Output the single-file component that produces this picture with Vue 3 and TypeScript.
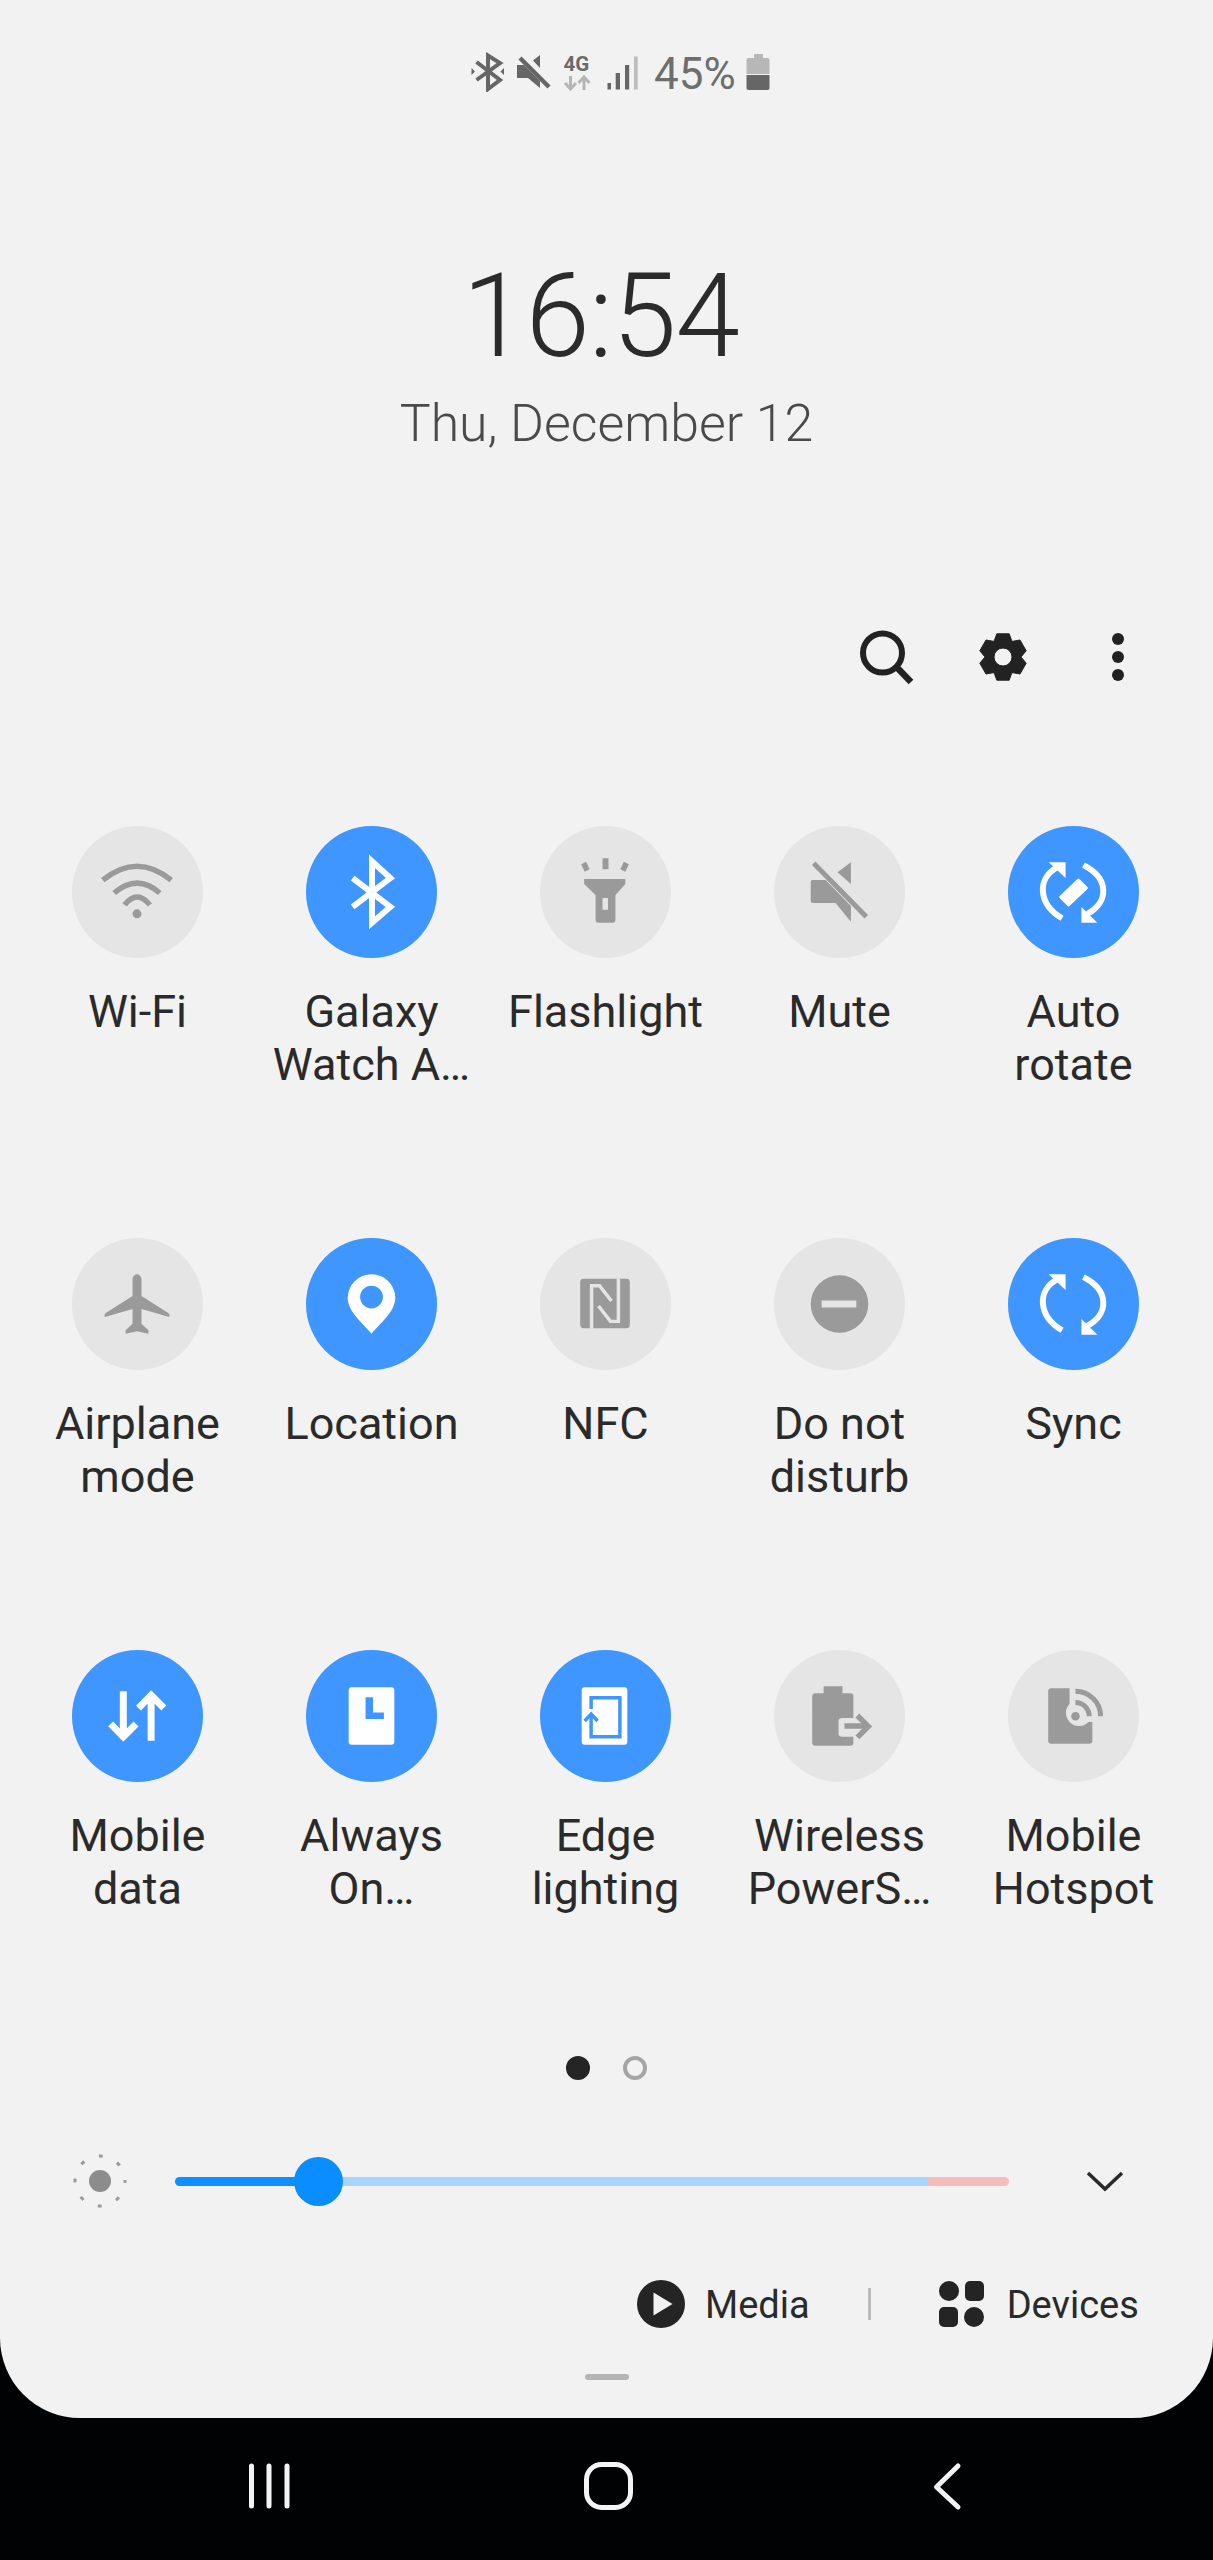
<template>
  <div class="screen">
    <div class="panel">
      <div class="status">
        <svg class="status__icons" width="170" height="40" viewBox="470 52 170 40">
          <!-- bluetooth connected -->
          <path class="st-line" stroke-width="4" d="M476.5 62 L500 80 L488 89 V55.5 L500 63 L476.5 80" />
          <path class="st-fill" d="M471.5 68 L475 71.5 L471.5 75 Z M504 68 L500.5 71.5 L504 75 Z" />
          <!-- mute -->
          <path class="st-fill" d="M533 60.5 L540 55 V68 Z M517 65 H524 L540 81 V88 L528 78 H517 Z" />
          <path class="st-line" stroke-width="4.5" d="M520 58 L549 87" />
          <!-- 4G + arrows -->
          <text class="st-net" x="563.5" y="71">4G</text>
          <path class="st-pale" stroke-width="3" d="M570.5 76 V88 M565 83 L570.5 89 L576 83 M584 90 V78 M578.5 83 L584 77 L589.5 83" />
          <!-- signal -->
          <path class="st-fill" d="M607.5 83 h3.5 v6.5 h-3.5 Z M615.7 73 h4.3 v16.5 h-4.3 Z M625 65 h4.2 v24.5 h-4.2 Z" />
          <path class="st-bar" d="M634 56.5 h3.7 v33 h-3.7 Z" />
        </svg>
        <span class="status__pct">45%</span>
        <svg class="status__batt" width="26" height="38" viewBox="0 0 26 38">
          <path fill="#b7b7b7" d="M8 1 h9 v4 h4.5 q2 0 2 2 v14 h-23 v-14 q0 -2 2 -2 h5.500 Z" />
          <path fill="#666" d="M.5 22 h23 v13 q0 2 -2 2 h-19 q-2 0 -2 -2 Z" />
        </svg>
      </div>

      <div class="clock">
        <div class="clock__time">16:54</div>
        <div class="clock__date">Thu, December 12</div>
      </div>

      <div class="actions">
        <svg width="60" height="60" viewBox="0 0 60 60">
          <circle class="act-line" cx="26.500" cy="26" r="19.500" stroke-width="6" />
          <path class="act-line" stroke-width="6.500" d="M40.500 40 L55 55" />
        </svg>
        <svg width="60" height="60" viewBox="0 0 60 60">
          <path class="act-gear" :d="gearPath" fill-rule="evenodd" />
        </svg>
        <svg width="60" height="60" viewBox="0 0 60 60">
          <circle class="act-fill" cx="30" cy="12" r="6" />
          <circle class="act-fill" cx="30" cy="30" r="6" />
          <circle class="act-fill" cx="30" cy="48" r="6" />
        </svg>
      </div>

      <div class="grid">
        <div v-for="t in tiles" :key="t.label" class="tile" :class="{ 'tile--on': t.on }">
          <div class="tile__disc">
            <svg class="tile__glyph" viewBox="0 0 132 132">
              <path
                v-for="(p, i) in t.icon"
                :key="i"
                :d="p.d"
                :class="p.c"
                :stroke-width="p.w"
                fill-rule="evenodd"
              />
            </svg>
          </div>
          <div class="tile__label">{{ t.label }}</div>
        </div>
      </div>

      <div class="pager">
        <span class="pager__dot pager__dot--active"></span>
        <span class="pager__dot"></span>
      </div>

      <div class="bright">
        <svg class="bright__sun" width="64" height="64" viewBox="0 0 64 64">
          <circle cx="32" cy="32" r="11" fill="#8c8c8c" />
          <circle
            cx="32"
            cy="32"
            r="25"
            fill="none"
            stroke="#999"
            stroke-width="3"
            stroke-dasharray="4 15.635"
            stroke-dashoffset="2"
          />
        </svg>
        <div class="bright__track">
          <span class="seg seg--done"></span>
          <span class="seg seg--rest"></span>
          <span class="seg seg--hot"></span>
          <span class="bright__thumb"></span>
        </div>
        <svg class="bright__more" width="40" height="24" viewBox="0 0 40 24">
          <path fill="none" stroke="#2a2a2a" stroke-width="3.500" d="M3 4 L20 20 L37 4" />
        </svg>
      </div>

      <div class="media">
        <svg width="48" height="48" viewBox="0 0 48 48">
          <path fill="#242424" d="M24 0 a24 24 0 1 0 0 48 a24 24 0 1 0 0 -48 Z" />
          <path fill="#f2f2f2" d="M16.500 12.500 L35.500 24 L16.500 35.500 Z" />
        </svg>
        <span class="media__text">Media</span>
        <span class="media__rule"></span>
        <svg width="45" height="46" viewBox="0 0 45 46">
          <circle cx="10" cy="10" r="10" fill="#242424" />
          <rect x="26" y="0" width="19" height="20" rx="5" fill="#242424" />
          <rect x="0" y="26" width="19" height="20" rx="5" fill="#242424" />
          <circle cx="35" cy="36" r="10" fill="#242424" />
        </svg>
        <span class="media__text media__text--devices">Devices</span>
      </div>

      <div class="handle"></div>
    </div>

    <div class="nav">
      <svg width="1213" height="142" viewBox="0 2418 1213 142">
        <path class="nav-line" d="M251.500 2466 V2506 M269 2466 V2506 M287 2466 V2506" />
        <rect class="nav-line" x="586.500" y="2464.500" width="44" height="43" rx="15" />
        <path class="nav-line" d="M958 2466 L936.500 2487 L958 2507" />
      </svg>
    </div>
  </div>
</template>

<script setup lang="ts">
interface Shape {
  d: string;
  c?: "ln" | "cut" | "hole";
  w?: number;
}

interface Tile {
  label: string;
  on: boolean;
  icon: Shape[];
}

// rotate and sync share the same two arrows
const arrows: Shape[] = [
  { d: "M54.500 92.500 C30 78 29 52 50 41", c: "ln", w: 6 },
  { d: "M41 36 H58 V52 Z" },
  { d: "M76 39 C102 52 102 76 80 88", c: "ln", w: 6 },
  { d: "M74 81 V97 H90 Z" },
];

const tiles: Tile[] = [
  {
    label: "Wi-Fi",
    on: false,
    icon: [
      { d: "M31 54 Q65.500 26 100 54", c: "ln", w: 5.5 },
      { d: "M42.500 67 Q65.500 47 88.500 67", c: "ln", w: 5.5 },
      { d: "M53 79 Q65.500 63 78.500 79", c: "ln", w: 5.5 },
      { d: "M65.500 83.500 a4.500 4.500 0 1 0 0 9 a4.500 4.500 0 1 0 0 -9 Z" },
    ],
  },
  {
    label: "Galaxy\nWatch A…",
    on: true,
    icon: [{ d: "M47 52 L85 81 L66.500 97 V35 L85 52 L47 81", c: "ln", w: 6 }],
  },
  {
    label: "Flashlight",
    on: false,
    icon: [
      { d: "M63 32 H69 V43 H63 Z M41.500 38 L46.500 35.500 L50 43 L45 45.500 Z M89.500 38 L84.500 35.500 L81 43 L86 45.500 Z" },
      { d: "M44.500 53 H86 V58 L76 69 V94 Q76 97 73 97 H59 Q56 97 56 94 V69 L44.500 58 Z M63 72 V84 H68.500 V72 Z" },
    ],
  },
  {
    label: "Mute",
    on: false,
    icon: [
      { d: "M64 46 L77.500 36 V58 Z M37 56 Q37 54 39 54 H52 L77.500 80 V96 L62 77 H39 Q37 77 37 75 Z" },
      { d: "M40 37 L93 91", c: "ln", w: 5 },
    ],
  },
  {
    label: "Auto\nrotate",
    on: true,
    icon: [
      ...arrows,
      { d: "M70 53 Q71 52 72 53 L80 61 Q81 62 80 63 L62 80 Q61 81 60 80 L52 72 Q51 71 52 70 Z" },
    ],
  },
  {
    label: "Airplane\nmode",
    on: false,
    icon: [
      { d: "M65.500 36 C68 36 70 38.500 70 41 V58 L97 75 Q99 76.500 98 79 L70 71 V86 L77 92.500 V96 L65.500 93.500 L54 96 V92.500 L61 86 V71 L33 79 Q32 76.500 34 75 L61 58 V41 C61 38.500 63 36 65.500 36 Z" },
    ],
  },
  {
    label: "Location",
    on: true,
    icon: [
      { d: "M66 96 C58 86 42 74 42 60 A24 24 0 0 1 90 60 C90 74 74 86 66 96 Z M66 47.500 A11.500 11.500 0 1 0 66 70.500 A11.500 11.500 0 1 0 66 47.500 Z" },
    ],
  },
  {
    label: "NFC",
    on: false,
    icon: [
      { d: "M44 40.500 H87 Q90.500 40.500 90.500 44 V87 Q90.500 90.500 87 90.500 H44 Q40.500 90.500 40.500 87 V44 Q40.500 40.500 44 40.500 Z" },
      { d: "M52 91 V47.500 H60 L72 63", c: "cut", w: 3.5 },
      { d: "M79 40 V83.500 H71 L59 68", c: "cut", w: 3.5 },
    ],
  },
  {
    label: "Do not\ndisturb",
    on: false,
    icon: [
      { d: "M66 37 a29 29 0 1 0 0 58 a29 29 0 1 0 0 -58 Z M48 62.500 V69.500 H83 V62.500 Z" },
    ],
  },
  { label: "Sync", on: true, icon: arrows },
  {
    label: "Mobile\ndata",
    on: true,
    icon: [
      { d: "M51.700 41 V88 M39 74 L51.700 87 L64.500 74", c: "ln", w: 7 },
      { d: "M79.700 91 V46 M67 58 L79.700 45 L92.500 58", c: "ln", w: 7 },
    ],
  },
  {
    label: "Always\nOn…",
    on: true,
    icon: [
      { d: "M46 37 H86 Q89 37 89 40 V92 Q89 95 86 95 H46 Q43 95 43 92 V40 Q43 37 46 37 Z M60 47 V69 H78.500 V62.500 H67.500 V47 Z" },
    ],
  },
  {
    label: "Edge\nlighting",
    on: true,
    icon: [
      { d: "M45 37 H85 Q88 37 88 40 V92 Q88 95 85 95 H45 Q42 95 42 92 V40 Q42 37 45 37 Z" },
      { d: "M51.500 59 V47.500 H80.500 V87 H51.500 V66", c: "cut", w: 3.5 },
      { d: "M45 71 L51.500 64 L58 71", c: "cut", w: 3.5 },
    ],
  },
  {
    label: "Wireless\nPowerS…",
    on: false,
    icon: [
      { d: "M50 36 H69 V43 H77 Q80 43 80 46 V68 H69 Q65 68 65 71 V84 Q65 87 69 87 H80 V93 Q80 96 77 96 H41.500 Q38.500 96 38.500 93 V46 Q38.500 43 41.500 43 H50 Z" },
      { d: "M71 76 H94 M84 65.500 L95 76.500 L84 87.500", c: "ln", w: 5.5 },
    ],
  },
  {
    label: "Mobile\nHotspot",
    on: false,
    icon: [
      { d: "M43.500 38 H62 V54 A13 13 0 1 0 81 72 H85 V91 Q85 94 82 94 H43.500 Q40.500 94 40.500 91 V41 Q40.500 38 43.500 38 Z" },
      { d: "M68 62 a4.300 4.300 0 1 0 0 8.600 a4.300 4.300 0 1 0 0 -8.600 Z" },
      { d: "M68 52.500 A13.800 13.800 0 0 1 81.800 66.300", c: "ln", w: 5 },
      { d: "M68 41 A25.300 25.300 0 0 1 93.300 66.300", c: "ln", w: 5 },
    ],
  },
];

// six flat-topped teeth, hole in the middle
const gearPath = (() => {
  const cx = 31;
  const cy = 30;
  const pts: string[] = [];
  const at = (deg: number, r: number) => {
    const a = (deg * Math.PI) / 180;
    return `${(cx + r * Math.cos(a)).toFixed(1)} ${(cy + r * Math.sin(a)).toFixed(1)}`;
  };
  for (let i = 0; i < 6; i++) {
    const mid = -90 + i * 60;
    pts.push(at(mid - 28, 18.5), at(mid - 15, 24), at(mid + 15, 24), at(mid + 28, 18.5));
  }
  const hole = `M${cx - 9} ${cy} a9 9 0 1 0 18 0 a9 9 0 1 0 -18 0 Z`;
  return `M${pts.join(" L")} Z ${hole}`;
})();
</script>

<style scoped>
.screen {
  width: 1213px;
  height: 2560px;
  background: #010204;
  font-family: Roboto, "Noto Sans", sans-serif;
  overflow: hidden;
}

.panel {
  height: 2418px;
  background: #f2f2f2;
  border-radius: 0 0 80px 80px;
  overflow: hidden;
  display: flex;
  flex-direction: column;
}

/* status bar */
.status {
  display: flex;
  align-items: center;
  height: 40px;
  margin-top: 52px;
  padding-left: 470px;
}
.status__pct {
  margin-left: 14px;
  padding-top: 3px;
  font-size: 44px;
  line-height: 40px;
  color: #6e6e6e;
}
.status__batt {
  margin-left: 10px;
}
.st-fill {
  fill: #666;
}
.st-bar {
  fill: #bdbdbd;
}
.st-line {
  fill: none;
  stroke: #666;
}
.st-pale {
  fill: none;
  stroke: #b5b5b5;
}
.st-net {
  font-size: 20.5px;
  font-weight: 700;
  fill: #6a6a6a;
}

/* clock */
.clock {
  margin-top: 164px;
  text-align: center;
}
.clock__time {
  padding-right: 12px;
  font-size: 116px;
  line-height: 120px;
  font-weight: 300;
  letter-spacing: -1px;
  color: #2b2b2b;
}
.clock__date {
  margin-top: 18px;
  font-size: 51.8px;
  line-height: 60px;
  font-weight: 300;
  color: #4a4a4a;
}

/* search / settings / more */
.actions {
  display: flex;
  justify-content: flex-end;
  gap: 56px;
  margin-top: 173px;
  padding-right: 65px;
}
.actions svg {
  display: block;
}
.act-line {
  fill: none;
  stroke: #222;
}
.act-fill {
  fill: #222;
}
.act-gear {
  fill: #222;
  stroke: #222;
  stroke-width: 1;
  stroke-linejoin: round;
}

/* quick setting tiles */
.grid {
  display: grid;
  grid-template-columns: repeat(5, 234px);
  row-gap: 148px;
  margin-top: 139px;
  padding-left: 20.5px;
}
.tile {
  --ink: #9a9a9a;
  --back: #e5e5e5;
  display: flex;
  flex-direction: column;
  align-items: center;
  height: 264px;
}
.tile--on {
  --ink: #fff;
  --back: #3f96ff;
}
.tile__disc {
  width: 131px;
  height: 132px;
  border-radius: 50%;
  background: var(--back);
  flex: none;
}
.tile__glyph {
  display: block;
  width: 131px;
  height: 132px;
}
.tile__glyph path {
  fill: var(--ink);
}
.tile__glyph path.ln {
  fill: none;
  stroke: var(--ink);
}
.tile__glyph path.cut {
  fill: none;
  stroke: var(--back);
}
.tile__label {
  margin-top: 28px;
  font-size: 45px;
  line-height: 52.5px;
  color: #2a2a2a;
  text-align: center;
  white-space: pre-line;
}

/* pager */
.pager {
  display: flex;
  gap: 33px;
  justify-content: center;
  margin-top: 142px;
}
.pager__dot {
  width: 24px;
  height: 24px;
  box-sizing: border-box;
  border-radius: 50%;
  border: 4px solid #a5a5a5;
}
.pager__dot--active {
  background: #252525;
  border-color: #252525;
}

/* brightness */
.bright {
  display: flex;
  align-items: center;
  height: 48px;
  margin-top: 77px;
  padding-left: 68px;
}
.bright__track {
  position: relative;
  display: flex;
  width: 834px;
  height: 9px;
  margin-left: 43px;
  border-radius: 5px;
  overflow: visible;
}
.seg {
  display: block;
  height: 100%;
}
.seg--done {
  width: 143px;
  background: #0f8eff;
  border-radius: 5px 0 0 5px;
}
.seg--rest {
  width: 609px;
  background: #a8d5ff;
}
.seg--hot {
  width: 82px;
  background: #f5bcbc;
  border-radius: 0 5px 5px 0;
}
.bright__thumb {
  position: absolute;
  left: 119px;
  top: -20px;
  width: 49px;
  height: 49px;
  border-radius: 50%;
  background: #0a8dff;
}
.bright__more {
  margin-left: 76px;
}

/* media / devices */
.media {
  display: flex;
  align-items: center;
  height: 50px;
  margin-top: 74px;
  padding-left: 637px;
}
.media__text {
  margin-left: 20px;
  padding-top: 2px;
  font-size: 38px;
  line-height: 50px;
  color: #2a2a2a;
}
.media__text--devices {
  margin-left: 23px;
}
.media__rule {
  width: 3px;
  height: 32px;
  margin: 0 68px 0 58px;
  background: #bbb;
}

.handle {
  width: 44px;
  height: 6px;
  margin: 45px auto 0;
  border-radius: 3px;
  background: #b5b5b5;
}

/* nav bar */
.nav svg {
  display: block;
}
.nav-line {
  fill: none;
  stroke: #f4f4f4;
  stroke-width: 5;
  stroke-linecap: round;
  stroke-linejoin: round;
}
</style>
